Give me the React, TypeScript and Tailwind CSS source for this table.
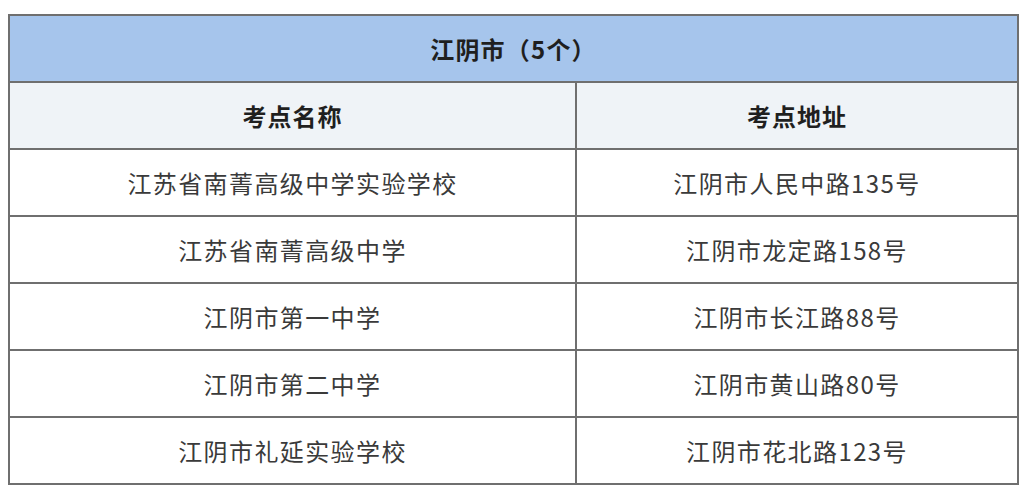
import React from "react";

const rows = [
  { name: "江苏省南菁高级中学实验学校", addr: "江阴市人民中路135号" },
  { name: "江苏省南菁高级中学", addr: "江阴市龙定路158号" },
  { name: "江阴市第一中学", addr: "江阴市长江路88号" },
  { name: "江阴市第二中学", addr: "江阴市黄山路80号" },
  { name: "江阴市礼延实验学校", addr: "江阴市花北路123号" },
];

export default function App() {
  return (
    <div
      className="min-h-[498px] w-[1030px] bg-white pl-2 pt-[14px]"
      style={{ fontFamily: '"Noto Sans CJK SC", "Noto Sans", sans-serif' }}
    >
      <div className="w-[1011px] border-2 border-[#6f6f6f]">
        {/* Title */}
        <div className="flex h-[65px] items-center justify-center bg-[#a6c5ec] text-[24px] font-bold tracking-[1.2px] text-[#1f1f1f]">
          江阴市（5个）
        </div>

        {/* Column headers */}
        <div className="grid grid-cols-[565px_1fr] border-t-2 border-[#6f6f6f] bg-[#eff3f7] text-[24px] font-bold tracking-[1px] text-[#1f1f1f]">
          <div className="flex h-[65px] items-center justify-center">考点名称</div>
          <div className="flex h-[65px] items-center justify-center border-l-2 border-[#6f6f6f]">
            考点地址
          </div>
        </div>

        {rows.map((r) => (
          <div
            key={r.name}
            className="grid grid-cols-[565px_1fr] border-t-2 border-[#6f6f6f] text-[24px] tracking-[1.4px] text-[#3a3a3a]"
          >
            <div className="flex h-[65px] items-center justify-center">{r.name}</div>
            <div className="flex h-[65px] items-center justify-center border-l-2 border-[#6f6f6f]">
              {r.addr}
            </div>
          </div>
        ))}
      </div>
    </div>
  );
}
